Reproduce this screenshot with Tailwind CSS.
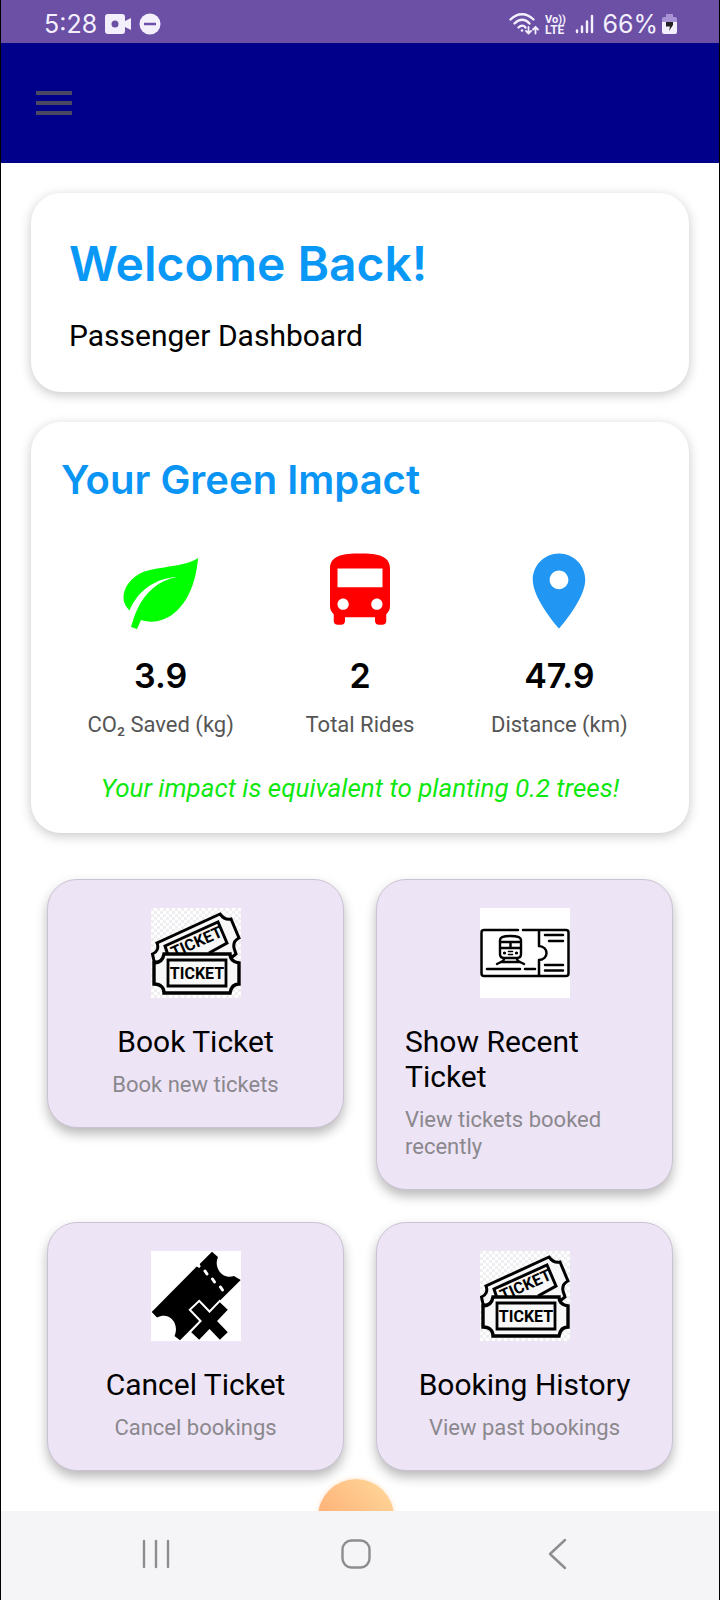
<!DOCTYPE html>
<html lang="en">
<head>
<meta charset="utf-8">
<meta name="viewport" content="width=device-width, initial-scale=1">
<title>Passenger Dashboard</title>
<script src="https://cdn.jsdelivr.net/npm/@tailwindcss/browser@4"></script>
</head>
<body class="bg-black font-[Roboto,sans-serif] text-black">
<svg class="size-0" aria-hidden="true">
  <defs>
    <pattern id="checker" width="6" height="6" patternUnits="userSpaceOnUse">
      <rect width="6" height="6" fill="#fff"/>
      <path d="M0 0h3v3H0zM3 3h3v3H3z" fill="#efeff1"/>
    </pattern>
    <symbol id="tickets" viewBox="0 0 90 90">
      <rect width="90" height="90" fill="url(#checker)"/>
      <g stroke="#000" stroke-width="3" fill="#f8f8f8">
        <path d="M3 53L1.500 46C6 44 8 40 6 35L69 6c3 4 7 6 11 5l8 19c-4 2-6 5-5 10l2 6-10 8H5z"/>
        <path d="M18 50L14 38 67 14l9 21-18 10"/>
      </g>
      <text transform="translate(23 50) rotate(-24)" font-family="Roboto, sans-serif" font-weight="700" font-size="16">TICKET</text>
      <path d="M13 46h66c0 5 3 8 9 9v21c-5 0-8 3-9 9H13c0-5-3-9-10-9V55c6 0 9-3 10-9z" fill="#f8f8f8" stroke="#000" stroke-width="3.400"/>
      <path d="M17 52h58v26H17z" fill="#f8f8f8" stroke="#000" stroke-width="2.800"/>
      <text x="46" y="71" text-anchor="middle" font-family="Roboto, sans-serif" font-weight="700" font-size="16">TICKET</text>
    </symbol>
  </defs>
</svg>

<div class="mx-px flex min-h-screen flex-col bg-white">
  <div class="flex h-[43px] items-center justify-between bg-[#6b50a6] pt-1 pr-[42px] pl-[43px] text-[#f4effc]">
    <div class="flex items-center gap-2">
      <span class="font-[Inter,sans-serif] text-[25px] leading-8">5:28</span>
      <svg class="h-[22px] w-[26px]" viewBox="0 0 26 22" fill="currentColor" aria-hidden="true"><path fill-rule="evenodd" d="M3 1h14a3 3 0 0 1 3 3v4l6-3v12l-6-3v4a3 3 0 0 1-3 3H3a3 3 0 0 1-3-3V4a3 3 0 0 1 3-3zm7 6.500a3.500 3.500 0 1 0 0 7 3.500 3.500 0 0 0 0-7z"/></svg>
      <svg class="size-[22px]" viewBox="0 0 22 22" aria-hidden="true"><circle cx="11" cy="11" r="10.500" fill="currentColor"/><path d="M5 11h12" stroke="#6b50a6" stroke-width="2.500"/></svg>
    </div>
    <div class="flex items-center">
      <svg class="mr-1.5 h-6 w-[30px]" viewBox="0 0 30 24" fill="none" stroke="currentColor" stroke-width="2.400" stroke-linecap="round" aria-hidden="true"><path d="M1.500 7.500c7-7 16-7 23 0M5.500 11.500c5-5 10.500-5 15 0M9.500 15.500c2.500-2.500 5-2.500 7 0"/><circle cx="13" cy="18.500" r="1.300" fill="currentColor" stroke="none"/><path d="M19.500 15v6.500m-2.500-2.500 2.500 2.500 2.500-2.500M26.500 21.500V15m-2.500 2.500 2.500-2.500 2.500 2.500" stroke-width="1.800"/></svg>
      <svg class="mr-2 h-6 w-[22px]" viewBox="0 0 22 24" fill="currentColor" font-family="Roboto, sans-serif" font-weight="700" aria-hidden="true"><text x="0" y="11" font-size="11">Vo))</text><text x="0" y="22" font-size="12">LTE</text></svg>
      <svg class="mr-2 h-5 w-[19px]" viewBox="0 0 19 20" fill="none" stroke="currentColor" stroke-width="2.400" stroke-linecap="round" aria-hidden="true"><path d="M2 18v-1.500M7 18v-5.500M12 18V7.500M17 18V2"/></svg>
      <span class="mr-1 font-[Inter,sans-serif] text-[25px] leading-8">66%</span>
      <svg class="h-[22px] w-[15px]" viewBox="0 0 15 22" aria-hidden="true"><path d="M4 1h7v3h2a2 2 0 0 1 2 2v6H0V6a2 2 0 0 1 2-2h2z" fill="#a893d6"/><path d="M0 9h15v10a2 2 0 0 1-2 2H2a2 2 0 0 1-2-2z" fill="currentColor"/><path d="M4 9h7v3l-4 6 1-4.500H4z" fill="#222"/></svg>
    </div>
  </div>

  <header class="flex h-[120px] items-center bg-[#00008b] px-[35px]">
    <button type="button" aria-label="Open menu" class="flex flex-col gap-1.5">
      <span class="h-1 w-9 bg-[#4b4864]"></span>
      <span class="h-1 w-9 bg-[#4b4864]"></span>
      <span class="h-1 w-9 bg-[#4b4864]"></span>
    </button>
  </header>

  <main class="px-[30px] pt-[30px]">
    <section class="rounded-[30px] bg-white px-[38px] pt-[43px] pb-[39px] shadow-[0_3px_12px_rgba(0,0,0,0.22)]">
      <h1 class="font-[Inter,sans-serif] text-[48px] leading-[56px] font-semibold text-[#0a98f7]">Welcome Back!</h1>
      <p class="mt-[26px] text-[30px] leading-[35px]">Passenger Dashboard</p>
    </section>

    <section class="mt-[30px] rounded-[30px] bg-white px-[30px] pt-[34px] pb-[30px] shadow-[0_3px_12px_rgba(0,0,0,0.22)]">
      <h2 class="font-[Inter,sans-serif] text-[40px] leading-[48px] font-semibold text-[#0a95f4]">Your Green Impact</h2>
      <div class="mt-[42px] grid grid-cols-3">
        <div class="flex flex-col items-center">
          <svg class="size-[90px]" viewBox="0 0 90 90" aria-hidden="true"><path fill="#0f0" d="M82 12C73 19 53 20 34 24 19 27 7.500 39 7.500 52c0 5 2.500 9 6 12.500C22 44 40 32 61 31 43 34 29 46 21 64c-3 6-4 11-6 17l6 2 4-9c6 2 12 2 17 1C66 70 80 42 82 12z"/></svg>
          <p class="mt-[19px] font-[Inter,sans-serif] text-[34px] leading-[42px] font-semibold">3.9</p>
          <p class="mt-[14px] text-[22px] leading-[27px] text-[#555]">CO₂ Saved (kg)</p>
        </div>
        <div class="flex flex-col items-center">
          <svg class="size-[90px]" viewBox="0 0 24 24" aria-hidden="true"><path fill="#f00" d="M4 16c0 .88.39 1.670 1 2.220V20c0 .55.45 1 1 1h1c.55 0 1-.45 1-1v-1h8v1c0 .55.45 1 1 1h1c.55 0 1-.45 1-1v-1.780c.61-.55 1-1.340 1-2.220V6c0-3.500-3.580-4-8-4s-8 .5-8 4v10zm3.500 1c-.83 0-1.500-.67-1.500-1.500S6.670 14 7.500 14s1.500.67 1.500 1.500S8.330 17 7.500 17zm9 0c-.83 0-1.500-.67-1.500-1.500s.67-1.500 1.500-1.500 1.500.67 1.500 1.500-.67 1.500-1.500 1.500zm1.500-6H6V6h12v5z"/></svg>
          <p class="mt-[19px] font-[Inter,sans-serif] text-[34px] leading-[42px] font-semibold">2</p>
          <p class="mt-[14px] text-[22px] leading-[27px] text-[#555]">Total Rides</p>
        </div>
        <div class="flex flex-col items-center">
          <svg class="size-[90px]" viewBox="0 0 24 24" aria-hidden="true"><path fill="#2196f3" d="M12 2C8.130 2 5 5.130 5 9c0 5.250 7 13 7 13s7-7.750 7-13c0-3.870-3.130-7-7-7zm0 9.500c-1.380 0-2.500-1.120-2.500-2.500s1.120-2.500 2.500-2.500 2.500 1.120 2.500 2.500-1.120 2.500-2.500 2.500z"/></svg>
          <p class="mt-[19px] font-[Inter,sans-serif] text-[34px] leading-[42px] font-semibold">47.9</p>
          <p class="mt-[14px] text-[22px] leading-[27px] text-[#555]">Distance (km)</p>
        </div>
      </div>
      <p class="mt-[35px] text-center text-[26px] leading-[30px] text-[#0fe80f] italic">Your impact is equivalent to planting 0.2 trees!</p>
    </section>

    <div class="mt-[46px] grid grid-cols-2 items-start gap-x-8 gap-y-8 px-4">
      <button type="button" class="flex flex-col items-center rounded-[30px] border border-[#cbc3d3] bg-[#ede4f6] px-[28px] pt-[28px] pb-[29px] shadow-[0_6px_12px_rgba(0,0,0,0.28)]">
        <svg class="size-[90px]" aria-hidden="true"><use href="#tickets"/></svg>
        <span class="mt-[26px] text-[30px] leading-[35px]">Book Ticket</span>
        <span class="mt-3 text-[22px] leading-[27px] text-[#8b888d]">Book new tickets</span>
      </button>

      <button type="button" class="flex flex-col items-start rounded-[30px] border border-[#cbc3d3] bg-[#ede4f6] px-[28px] pt-[28px] pb-[29px] text-left shadow-[0_6px_12px_rgba(0,0,0,0.28)]">
        <svg class="size-[90px] self-center" viewBox="0 0 90 90" fill="none" stroke="#000" stroke-width="2.500" stroke-linecap="round" stroke-linejoin="round" aria-hidden="true">
          <rect width="90" height="90" fill="#fff" stroke="none"/>
          <path d="M38 22H4a2.500 2.500 0 0 0-2.500 2.500v41A2.500 2.500 0 0 0 4 68h82a2.500 2.500 0 0 0 2.500-2.500v-41A2.500 2.500 0 0 0 86 22H43M59 22v16c10 1 10 13 0 14v16M65 27h18M69 33h14M65 57h18M65 62.500h18M7 61h33M45 61h10"/>
          <path d="M20 32c0-3 3-4 10.500-4S41 29 41 32v14c0 3-1 4-4 4H24c-3 0-4-1-4-4zM20 34h21M20 40h21M30.500 34v6M24 51c0 2-3 3-7 5M37 51c0 2 3 3 7 5M22 54h17" stroke-width="2.400"/>
          <path d="M28.500 43.500h4M28.500 46.500h4" stroke-width="1.600"/><circle cx="24.500" cy="45" r="1" fill="#000" stroke-width="1.200"/><circle cx="36.500" cy="45" r="1" fill="#000" stroke-width="1.200"/>
        </svg>
        <span class="mt-[26px] text-[30px] leading-[35px]">Show Recent Ticket</span>
        <span class="mt-3 text-[22px] leading-[27px] text-[#8b888d]">View tickets booked recently</span>
      </button>

      <button type="button" class="flex flex-col items-center rounded-[30px] border border-[#cbc3d3] bg-[#ede4f6] px-[28px] pt-[28px] pb-[29px] shadow-[0_6px_12px_rgba(0,0,0,0.28)]">
        <svg class="size-[90px]" viewBox="0 0 90 90" aria-hidden="true">
          <rect width="90" height="90" fill="#fff"/>
          <path d="M61 .7L67 6c-5 11 5 23 16 19l6.700 4L29 89.300 23.500 85C29 72 18 60 6 66.500L.7 61 45.700 15.500l2.500 1.500 1.500-1.500-1-2.500z"/>
          <path d="M54 20l2 3M61.500 28l2 3M69.500 36l2 3" stroke="#fff" stroke-width="3" stroke-linecap="round"/>
          <path d="M48 59l21 22M69 59L48 81" stroke="#fff" stroke-width="15" stroke-linecap="square"/>
          <path d="M48 59l21 22M69 59L48 81" stroke="#000" stroke-width="11" stroke-linecap="square"/>
        </svg>
        <span class="mt-[26px] text-[30px] leading-[35px]">Cancel Ticket</span>
        <span class="mt-3 text-[22px] leading-[27px] text-[#8b888d]">Cancel bookings</span>
      </button>

      <button type="button" class="flex flex-col items-center rounded-[30px] border border-[#cbc3d3] bg-[#ede4f6] px-[28px] pt-[28px] pb-[29px] shadow-[0_6px_12px_rgba(0,0,0,0.28)]">
        <svg class="size-[90px]" aria-hidden="true"><use href="#tickets"/></svg>
        <span class="mt-[26px] text-[30px] leading-[35px]">Booking History</span>
        <span class="mt-3 text-[22px] leading-[27px] text-[#8b888d]">View past bookings</span>
      </button>
    </div>
  </main>

  <div class="mt-auto flex h-[39px] items-start justify-center overflow-hidden pt-[7px] pr-2">
    <button type="button" aria-label="Assistant" class="size-[76px] shrink-0 rounded-full bg-linear-to-tr from-[#ffa26a] to-[#ffda9c] shadow-[0_0_3px_2px_#fff0e4]"></button>
  </div>

  <nav aria-label="System" class="flex h-[89px] items-center bg-[#f5f5f8] pr-2 pb-1 text-[#8d8d90]">
    <div class="grid w-full grid-cols-[1fr_88px_1fr] items-center">
      <button type="button" aria-label="Recent apps" class="mr-[141px] justify-self-end"><svg class="h-8 w-[30px]" viewBox="0 0 30 32" stroke="currentColor" stroke-width="2.400" stroke-linecap="round"><path d="M3 3v26M15 3v26M27 3v26"/></svg></button>
      <button type="button" aria-label="Home" class="justify-self-center"><svg class="size-8" viewBox="0 0 32 32" fill="none" stroke="currentColor" stroke-width="2.400"><rect x="2.500" y="2.500" width="27" height="27" rx="9"/></svg></button>
      <button type="button" aria-label="Back" class="ml-[147px] justify-self-start"><svg class="h-8 w-5" viewBox="0 0 20 32" fill="none" stroke="currentColor" stroke-width="2.400" stroke-linecap="round" stroke-linejoin="round"><path d="M18 2L3 16l15 14"/></svg></button>
    </div>
  </nav>
</div>
</body>
</html>
